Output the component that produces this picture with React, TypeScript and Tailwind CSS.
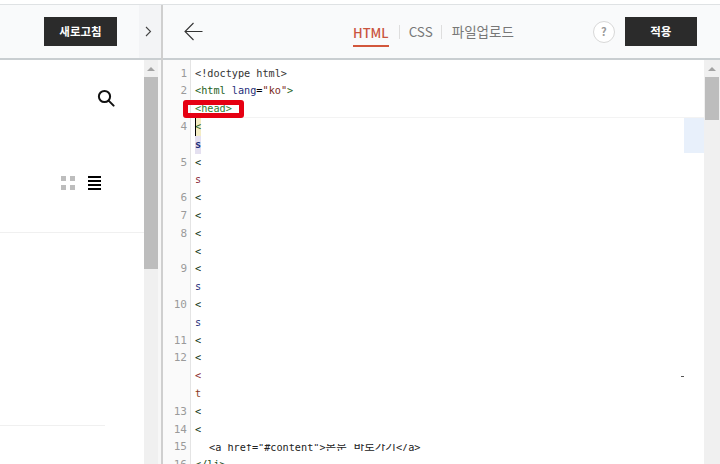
import React from 'react';

type Line = { num?: number; text: React.ReactNode; bg?: string; cls?: string };

const lines: Line[] = [
  { num: 1, text: '<!doctype html>', cls: 'text-[#333]' },
  {
    num: 2,
    text: (
      <>
        <span className="text-[#1d5f1d]">&lt;html</span> <span className="text-[#1f2f7a]">lang</span>=
        <span className="text-[#7a2a22]">"ko"</span>
        <span className="text-[#1d5f1d]">&gt;</span>
      </>
    ),
  },
  { num: undefined, text: '<head>', cls: 'text-[#2f7d2f]' },
  { num: 4, text: '<', cls: 'text-[#1d5f1d]', bg: 'bg-[#f3ecc4]' },
  { text: 's', cls: 'text-[#1f2f7a] font-bold', bg: 'bg-[#e4e0f0]' },
  { num: 5, text: '<', cls: 'text-[#0f330f]' },
  { text: 's', cls: 'text-[#8a2a3a]' },
  { num: 6, text: '<', cls: 'text-[#0f330f]' },
  { num: 7, text: '<', cls: 'text-[#0f330f]' },
  { num: 8, text: '<', cls: 'text-[#0f330f]' },
  { text: '<', cls: 'text-[#0f330f]' },
  { num: 9, text: '<', cls: 'text-[#0f330f]' },
  { text: 's', cls: 'text-[#1f2f7a]' },
  { num: 10, text: '<', cls: 'text-[#0f330f]' },
  { text: 's', cls: 'text-[#1f2f7a]' },
  { num: 11, text: '<', cls: 'text-[#0f330f]' },
  { num: 12, text: '<', cls: 'text-[#0f330f]' },
  { text: '<', cls: 'text-[#8a2a2a]' },
  { text: 't', cls: 'text-[#8a3a22]' },
  { num: 13, text: '<', cls: 'text-[#0f330f]' },
  { num: 14, text: '<', cls: 'text-[#0f330f]' },
];

const Scrollbar = ({ track, thumb }: { track: string; thumb: string }) => (
  <div className={`flex shrink-0 flex-col bg-[#f0f0f0] ${track}`}>
    <div className="flex h-[17px] items-center justify-center">
      <div className="h-0 w-0 border-x-[4px] border-b-[4px] border-x-transparent border-b-[#a3a3a3]" />
    </div>
    <div className={`${thumb} bg-[#bdbdbd]`} />
  </div>
);

export default function App() {
  return (
    <div
      className="flex h-[464px] w-[720px] flex-col overflow-hidden bg-white pt-[4px]"
      style={{ fontFamily: '"Noto Sans CJK KR", "Noto Sans", sans-serif' }}
    >
      <div className="flex h-full min-h-0 border-t border-[#dfe2e4]">
        {/* left panel */}
        <div className="flex w-[161px] shrink-0 flex-col">
          <div className="flex h-[55px] shrink-0 border-b-2 border-[#c9ced1]">
            <div className="flex w-[139px] items-center justify-end bg-[#f9fafb] pr-[22px]">
              <button className="h-[29px] w-[73px] bg-[#2b2b2b] text-[11.5px] font-bold text-white">새로고침</button>
            </div>
            <div className="flex flex-1 items-center justify-center bg-[#f3f4f6] pr-[4px]">
              <svg width="7" height="11" viewBox="0 0 7 11" fill="none" stroke="#444" strokeWidth="1.1">
                <path d="M1 1l4.5 4.5L1 10" />
              </svg>
            </div>
          </div>
          <div className="flex min-h-0 flex-1">
            <div className="flex w-[144px] shrink-0 flex-col">
              <div className="flex justify-end pt-[29px] pr-[29px]">
                <svg width="18" height="18" viewBox="0 0 18 18" fill="none" stroke="#111" strokeWidth="2">
                  <circle cx="7.5" cy="7.5" r="5.6" />
                  <path d="M11.6 11.6l5 5" strokeLinecap="round" />
                </svg>
              </div>
              <div className="flex items-center justify-end gap-[13px] pt-[69px] pr-[43px]">
                <div className="grid grid-cols-2 gap-[4px]">
                  <div className="h-[5px] w-[5px] bg-[#bdbdbd]" />
                  <div className="h-[5px] w-[5px] bg-[#bdbdbd]" />
                  <div className="h-[5px] w-[5px] bg-[#bdbdbd]" />
                  <div className="h-[5px] w-[5px] bg-[#bdbdbd]" />
                </div>
                <div className="flex w-[13px] flex-col gap-[2px]">
                  <div className="h-[2px] bg-black" />
                  <div className="h-[2px] bg-black" />
                  <div className="h-[2px] bg-black" />
                  <div className="h-[2px] bg-black" />
                </div>
              </div>
              <div className="mt-[42px] h-[1px] w-full bg-[#f0f0f0]" />
              <div className="mt-[192px] h-[1px] w-[105px] bg-[#f0f0f0]" />
            </div>
            <Scrollbar track="w-[14px]" thumb="h-[192px]" />
            <div className="w-[3px] bg-[#f7f7f7]" />
          </div>
        </div>

        {/* editor panel */}
        <div className="flex min-w-0 flex-1 flex-col border-l-2 border-[#cfcfcf]">
          <div className="flex h-[55px] shrink-0 items-center border-b-2 border-[#c9ced1] bg-[#f9fafb] pl-[21px]">
            <svg width="19" height="19" viewBox="0 0 19 19" fill="none" stroke="#333" strokeWidth="1.1">
              <path d="M18.5 9.5H1M9.5 1L1 9.5 9.5 18" />
            </svg>
            <div className="ml-[150px] flex items-center text-[#777]">
              <div className="flex h-[30px] items-center border-b-2 border-[#d2573c] pt-[4px] text-[13px] font-medium text-[#c9553f]">
                HTML
              </div>
              <div className="mr-[9px] ml-[10px] h-[14px] w-px bg-[#dedede]" />
              <span className="text-[13.5px]">CSS</span>
              <div className="mr-[10px] ml-[8px] h-[14px] w-px bg-[#dedede]" />
              <span className="text-[13.5px]">파일업로드</span>
            </div>
            <div className="ml-[79px] flex h-[22px] w-[22px] items-center justify-center rounded-full border border-[#d8d8d8] bg-white text-[11px] font-bold text-[#9a9a9a]">
              ?
            </div>
            <button className="ml-[10px] h-[29px] w-[72px] bg-[#2b2b2b] text-[11.5px] font-bold text-white">적용</button>
          </div>
          <div className="flex min-h-0 flex-1">
            <div className="relative flex min-w-0 flex-1 overflow-hidden">
              {/* gutter */}
              <div className="w-[28px] shrink-0 border-r border-[#e4e4e4] bg-[#fafafa] pt-[4.6px] pr-[3px] text-right text-[11px] text-[#9a9a9a]" style={{ fontFamily: '"DejaVu Sans Mono", monospace' }}>
                {lines.map((l, i) => (
                  <div key={i} className="h-[17.8px] leading-[17.8px]">
                    {l.num ?? ''}
                  </div>
                ))}
                <div className="h-[17.8px] leading-[17.8px]">15</div>
                <div className="h-[17.8px] leading-[17.8px]">16</div>
              </div>
              {/* code */}
              <div className="min-w-0 flex-1 pt-[4.6px] pl-[4px] text-[10.2px]" style={{ fontFamily: '"DejaVu Sans Mono", "Noto Sans CJK KR", monospace' }}>
                {lines.map((l, i) => (
                  <div key={i} className={`flex h-[17.8px] items-center justify-between leading-[17.8px] ${i === 2 ? 'border-b border-[#f3f3f3]' : ''}`}>
                    <span className={`${l.cls ?? ''} ${l.bg ?? ''}`}>{l.text}</span>
                    {i === 17 && <div className="mr-[20px] h-[1px] w-[3px] bg-[#555]" />}
                  </div>
                ))}
                {/* line 15: only the lower half of the text shows in the reference */}
                <div className="mt-[6px] flex h-[7px] items-end overflow-hidden pl-[14px] leading-[17.8px] text-[#222]">
                  <span className="-mb-[5px] whitespace-nowrap">
                    &lt;a href="#content"&gt;<span className="text-[11.5px]">본문 바로가기</span>&lt;/a&gt;
                  </span>
                </div>
                <div className="mt-[4.8px] h-[17.8px] leading-[17.8px] text-[#1d4f1d]">&lt;/li&gt;</div>
              </div>
              {/* selection marker and caret */}
              <div className="absolute top-[58px] right-0 h-[35px] w-[20px] bg-[#e8f0fb]" />
              <div className="absolute top-[58px] left-[32px] h-[18px] w-px bg-black" />
              {/* annotation box */}
              <div className="absolute top-[40px] left-[20px] h-[18px] w-[61px] rounded-[3px] border-[5px] border-[#e60012]" />
            </div>
            <Scrollbar track="w-[16px] pr-[1px]" thumb="ml-[1px] h-[43px]" />
          </div>
        </div>
      </div>
    </div>
  );
}
